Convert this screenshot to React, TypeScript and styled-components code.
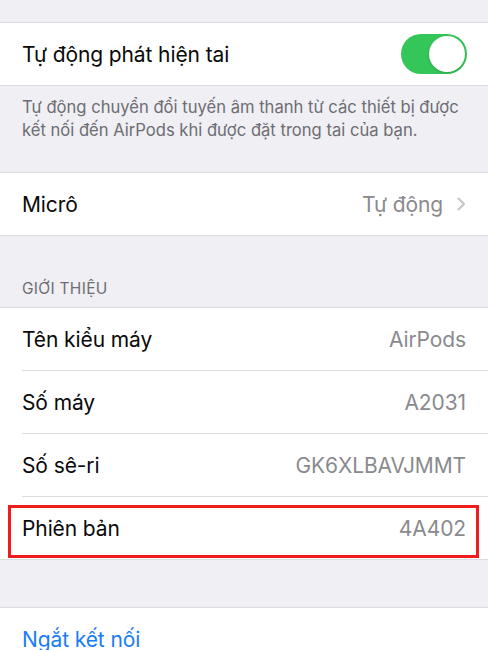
import React from "react";
import styled, { createGlobalStyle } from "styled-components";

const GlobalStyle = createGlobalStyle`
  html, body { margin: 0; padding: 0; background: #efeff4; }
  body { font-family: Inter, "Noto Sans", Roboto, sans-serif; -webkit-font-smoothing: antialiased; }
`;

const Page = styled.div`
  width: 488px;
  height: 650px;
  overflow: hidden;
  background: #efeff4;
  display: flex;
  flex-direction: column;
`;

const Spacer = styled.div<{ $h: number }>`
  height: ${(p) => p.$h}px;
  flex: none;
`;

const Group = styled.div`
  background: #ffffff;
  border-top: 1px solid #dcdce0;
  border-bottom: 1px solid #dcdce0;
  flex: none;
`;

const Row = styled.div<{ $divider?: boolean }>`
  position: relative;
  height: 62px;
  padding: 0 22px;
  display: flex;
  align-items: center;
  justify-content: space-between;
  &::after {
    content: "";
    display: ${(p) => (p.$divider ? "block" : "none")};
    position: absolute;
    left: 22px;
    right: 0;
    bottom: -1px;
    height: 1px;
    background: #dcdce0;
  }
  & + & {
    margin-top: 1px;
  }
`;

const Label = styled.span<{ $blue?: boolean }>`
  font-size: 21px;
  color: ${(p) => (p.$blue ? "#1a7cf5" : "#0a0a0a")};
  letter-spacing: -0.1px;
`;

const Value = styled.span`
  font-size: 21px;
  color: #8a8a8e;
  display: flex;
  align-items: center;
  gap: 14px;
  letter-spacing: -0.1px;
`;

const Footer = styled.div`
  height: 86px;
  box-sizing: border-box;
  padding: 10px 22px 0;
  font-size: 16.6px;
  line-height: 23px;
  color: #6d6d72;
  flex: none;
`;

const SectionHeader = styled.div`
  height: 71px;
  box-sizing: border-box;
  padding: 0 22px 9px;
  display: flex;
  align-items: flex-end;
  font-size: 15.5px;
  color: #6d6d72;
  letter-spacing: 0.3px;
  flex: none;
`;

const Toggle = styled.div`
  width: 66px;
  height: 40px;
  border-radius: 20px;
  background: #35c659;
  position: relative;
  margin-right: -1px;
`;

const Knob = styled.div`
  position: absolute;
  right: 2px;
  top: 2px;
  width: 36px;
  height: 36px;
  border-radius: 50%;
  background: #fff;
  box-shadow: 0 1px 3px rgba(0, 0, 0, 0.18);
`;

const Highlight = styled.div`
  position: absolute;
  left: 8px;
  right: 9px;
  top: 8px;
  height: 53px;
  box-sizing: border-box;
  border: 3px solid #ee1c1c;
  pointer-events: none;
`;

const Chevron = () => (
  <svg width="9" height="14" viewBox="0 0 9 14" fill="none">
    <path d="M1.5 1.5L7 7L1.5 12.5" stroke="#c4c4c8" strokeWidth="2" strokeLinecap="round" strokeLinejoin="round" />
  </svg>
);

const infoRows: [string, string][] = [
  ["Tên kiểu máy", "AirPods"],
  ["Số máy", "A2031"],
  ["Số sê-ri", "GK6XLBAVJMMT"],
];

export default function App() {
  return (
    <Page>
      <GlobalStyle />
      <Spacer $h={22} />
      <Group>
        <Row>
          <Label>Tự động phát hiện tai</Label>
          <Toggle>
            <Knob />
          </Toggle>
        </Row>
      </Group>
      <Footer>
        Tự động chuyển đổi tuyến âm thanh từ các thiết bị được
        <br />
        kết nối đến AirPods khi được đặt trong tai của bạn.
      </Footer>
      <Group>
        <Row>
          <Label>Micrô</Label>
          <Value>
            Tự động
            <Chevron />
          </Value>
        </Row>
      </Group>
      <SectionHeader>GIỚI THIỆU</SectionHeader>
      <Group>
        {infoRows.map(([k, v]) => (
          <Row key={k} $divider>
            <Label>{k}</Label>
            <Value>{v}</Value>
          </Row>
        ))}
        <Row>
          <Label>Phiên bản</Label>
          <Value>4A402</Value>
          <Highlight />
        </Row>
      </Group>
      <Spacer $h={47} />
      <Group>
        <Row>
          <Label $blue>Ngắt kết nối</Label>
        </Row>
      </Group>
    </Page>
  );
}
